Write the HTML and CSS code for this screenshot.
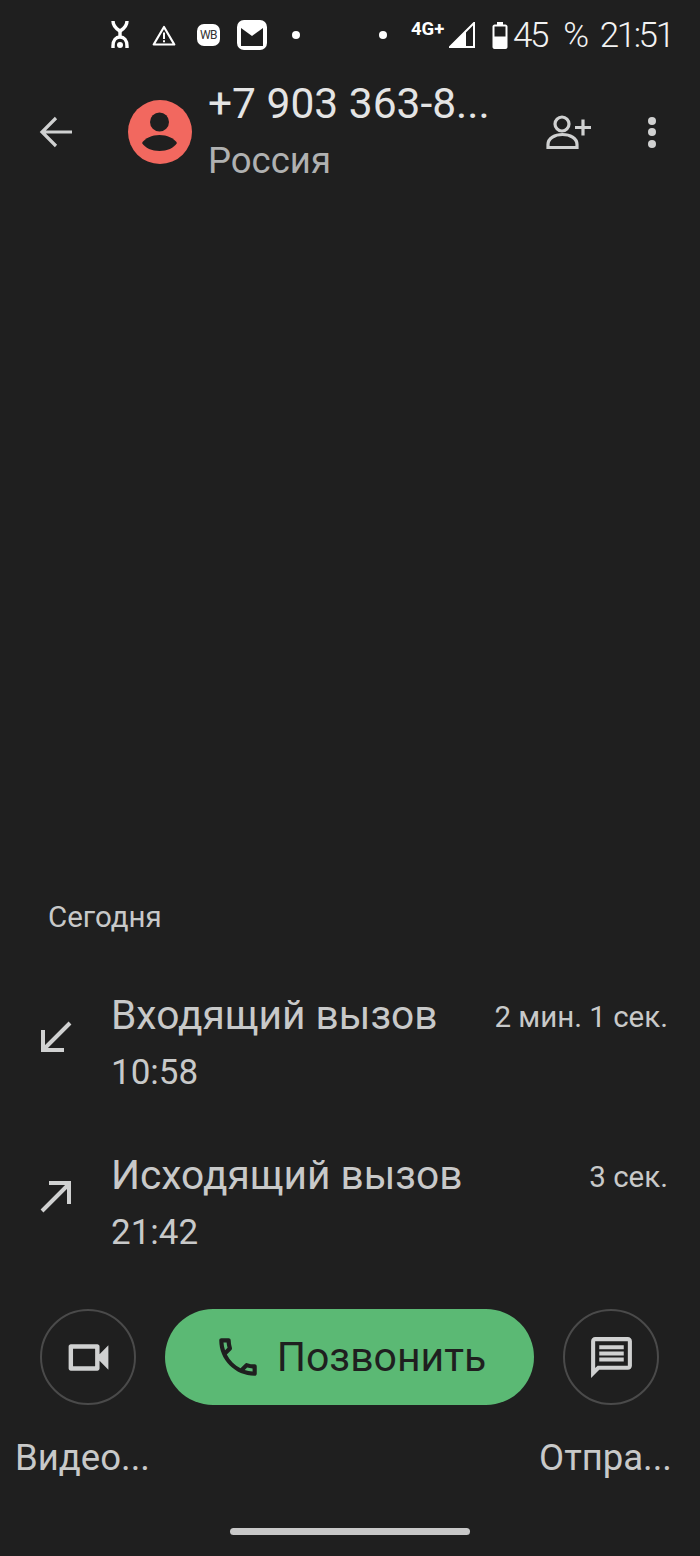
FILE: index.html
```html
<!DOCTYPE html>
<html lang="ru">
<head>
  <meta charset="UTF-8" />
  <meta name="viewport" content="width=device-width, initial-scale=1" />
  <title>Звонок</title>
  <link rel="stylesheet" href="styles.css">
</head>
<body>
  <div class="page">
    <div class="status-bar">
      <svg class="st-yota" width="20" height="30" viewBox="0 0 20 30">
        <path d="M3 1C3 7 7 9 10 11 13 9 17 7 17 1" fill="none" stroke="#fff" stroke-width="3.400"/>
        <path d="M10 9v7" stroke="#fff" stroke-width="3.400"/>
        <path d="M3 28v-2c0-6 3-9 7-9s7 3 7 9v2" fill="none" stroke="#fff" stroke-width="3.400"/>
        <circle cx="10" cy="25" r="3" fill="#fff"/>
      </svg>
      <svg class="st-warn" width="24" height="21" viewBox="0 0 24 21">
        <path d="M12 2 22.300 19.500H1.700z" fill="none" stroke="#fff" stroke-width="2.200" stroke-linejoin="round"/>
        <path d="M12 7.500v6.500M12 15.300v2" stroke="#fff" stroke-width="2"/>
      </svg>
      <span class="st-wb">WB</span>
      <span class="st-mail">
        <svg width="22" height="22" viewBox="0 0 22 22"><path d="M0 0H22V22H0z" fill="#1f1f1f"/><path d="M0 0H22V4L11 12 0 4z" fill="#fff"/></svg>
      </span>
      <span class="st-dot"></span>
      <span class="st-dot st-dot-second"></span>
      <span class="st-net">4G+</span>
      <svg class="st-signal" width="26" height="26" viewBox="0 0 26 26">
        <path d="M25 1V25H1z" fill="none" stroke="#fff" stroke-width="2"/>
        <path d="M17 9V25H1z" fill="#fff"/>
      </svg>
      <svg class="st-battery" width="16" height="27" viewBox="0 0 16 27">
        <path d="M5 0h6v2.500h2.500c1 0 2 1 2 2V25c0 1-1 2-2 2h-11c-1 0-2-1-2-2V4.500c0-1 1-2 2-2H5z" fill="#fff"/>
        <rect x="2.500" y="4.500" width="11" height="10" fill="#1f1f1f"/>
      </svg>
      <span class="st-text st-percent">45 %</span>
      <span class="st-text st-time">21:51</span>
    </div>

    <header class="top-bar">
      <svg class="back-icon" width="34" height="32" viewBox="0 0 34 32">
        <path d="M33 16H4M17 2 3 16l14 14" fill="none" stroke="#d0d1d1" stroke-width="3.200"/>
      </svg>
      <svg class="avatar" width="64" height="64" viewBox="0 0 64 64">
        <circle cx="32" cy="32" r="32" fill="#f2685f"/>
        <circle cx="31.500" cy="22" r="9.500" fill="#1f1f1f"/>
        <path d="M14 43c3-5 10-8 17.500-8s14.500 3 17.500 8c-3 5-10 8-17.500 8S17 48 14 43z" fill="#1f1f1f"/>
      </svg>
      <div class="contact">
        <div class="contact-name">+7 903 363-8...</div>
        <div class="contact-place">Россия</div>
      </div>
      <svg class="add-icon" width="46" height="34" viewBox="0 0 46 34">
        <circle cx="16" cy="9" r="7" fill="none" stroke="#d0d1d1" stroke-width="3.200"/>
        <path d="M2 32.500v-3C2 23 9 19.500 16.500 19.500S31 23 31 29.500v3z" fill="none" stroke="#d0d1d1" stroke-width="3.200"/>
        <path d="M29 12.500h16M37 4.500v16" stroke="#d0d1d1" stroke-width="3.200"/>
      </svg>
      <div class="more-icon"><span></span><span></span><span></span></div>
    </header>

    <main class="history">
      <div class="day-label">Сегодня</div>
      <div class="call-row">
        <svg class="call-arrow" width="34" height="34" viewBox="0 0 34 34">
          <path d="M31 3 5 29M4 10v20h21" fill="none" stroke="#d0d1d1" stroke-width="4"/>
        </svg>
        <div class="call-info">
          <div class="call-type">Входящий вызов</div>
          <div class="call-time">10:58</div>
        </div>
        <div class="call-length">2 мин. 1 сек.</div>
      </div>
      <div class="call-row">
        <svg class="call-arrow" width="34" height="34" viewBox="0 0 34 34">
          <path d="M3 31 29 5M10 3h20v21" fill="none" stroke="#d0d1d1" stroke-width="4"/>
        </svg>
        <div class="call-info">
          <div class="call-type">Исходящий вызов</div>
          <div class="call-time">21:42</div>
        </div>
        <div class="call-length">3 сек.</div>
      </div>
    </main>

    <div class="actions">
      <div class="round-btn">
        <svg width="53" height="53" viewBox="0 0 24 24" fill="#d0d1d1"><path d="M15 8v8H5V8h10m1-2H4c-.55 0-1 .45-1 1v10c0 .55.45 1 1 1h12c.55 0 1-.45 1-1v-3.500l4 4v-11l-4 4V7c0-.55-.45-1-1-1z"/></svg>
      </div>
      <div class="call-btn">
        <svg width="50" height="50" viewBox="0 0 24 24" fill="#1f1f1f"><path d="M6.540 5c.06.89.21 1.760.45 2.590l-1.200 1.200c-.41-1.200-.67-2.470-.76-3.790h1.510m9.860 12.020c.85.24 1.720.39 2.600.45v1.490c-1.320-.09-2.590-.35-3.800-.75l1.200-1.190M7.500 3H4c-.55 0-1 .45-1 1 0 9.390 7.610 17 17 17 .55 0 1-.45 1-1v-3.490c0-.55-.45-1-1-1-1.240 0-2.450-.2-3.570-.57-.1-.04-.21-.05-.31-.05-.26 0-.51.1-.71.29l-2.200 2.200c-2.830-1.450-5.150-3.760-6.590-6.590l2.200-2.200c.28-.28.36-.67.25-1.020C8.700 6.450 8.500 5.250 8.500 4c0-.55-.45-1-1-1z"/></svg>
        <span>Позвонить</span>
      </div>
      <div class="round-btn">
        <svg width="49" height="49" viewBox="0 0 24 24" fill="#d0d1d1"><path d="M20 2H4c-1.100 0-1.990.9-1.990 2L2 22l4-4h14c1.100 0 2-.9 2-2V4c0-1.100-.9-2-2-2zm0 14H5.170L4 17.170V4h16v12zM6 12h12v2H6zm0-3h12v2H6zm0-3h12v2H6z"/></svg>
      </div>
    </div>
    <div class="action-labels">
      <span>Видео...</span>
      <span>Отпра...</span>
    </div>
    <div class="nav-area"><div class="home-bar"></div></div>
  </div>
</body>
</html>
```

FILE: styles.css
```css
html, body {
  margin: 0;
  background-color: #1f1f1f;
}
.page {
  width: 700px;
  height: 1556px;
  display: flex;
  flex-direction: column;
  font-family: Roboto, 'Noto Sans', sans-serif;
  color: #c8c9c9;
  overflow: hidden;
}

/* status bar */
.status-bar {
  height: 70px;
  display: flex;
  align-items: center;
  padding-left: 110px;
  box-sizing: border-box;
  flex: none;
}
.st-yota { margin-right: 22px; }
.st-warn { margin-right: 21px; }
.st-wb {
  width: 23px;
  height: 22px;
  border-radius: 7px;
  background: #fff;
  color: #333;
  font-size: 12px;
  line-height: 22px;
  text-align: center;
  letter-spacing: -0.5px;
  margin-right: 17px;
}
.st-mail {
  width: 30px;
  height: 30px;
  border-radius: 7px;
  background: #fff;
  display: flex;
  align-items: center;
  justify-content: center;
  margin-right: 25px;
}
.st-dot {
  width: 8px;
  height: 8px;
  border-radius: 50%;
  background: #fff;
}
.st-dot-second {
  margin-left: 79px;
  margin-right: 24px;
}
.st-net {
  font-size: 18.500px;
  font-weight: 700;
  color: #fff;
  margin-top: -13px;
  width: 38px;
}
.st-signal { margin-right: 17px; }
.st-battery { margin-right: 5px; }
.st-text {
  font-size: 35px;
  font-weight: 300;
  letter-spacing: -2.400px;
  color: #f2f2f2;
}
.st-percent {
  margin-right: 13px;
  word-spacing: 10px;
}

/* contact header */
.top-bar {
  height: 124px;
  display: flex;
  align-items: center;
  flex: none;
}
.back-icon { margin-left: 39px; }
.avatar { margin-left: 55px; }
.contact {
  margin-left: 16px;
  width: 338px;
}
.contact-name {
  font-size: 42.500px;
  line-height: 58px;
  color: #e4e4e4;
  white-space: nowrap;
}
.contact-place {
  font-size: 36.500px;
  line-height: 56px;
  color: #b0b1b1;
}
.more-icon {
  margin-left: 56px;
  display: flex;
  flex-direction: column;
  gap: 3.500px;
}
.more-icon span {
  width: 8px;
  height: 8px;
  border-radius: 50%;
  background: #d0d1d1;
}

/* call history */
.history {
  flex: 1;
  display: flex;
  flex-direction: column;
  justify-content: flex-end;
  padding-bottom: 25px;
}
.day-label {
  font-size: 29.500px;
  line-height: 32px;
  padding-left: 48px;
  margin-bottom: 31px;
}
.call-row {
  height: 160px;
  display: flex;
  align-items: center;
  padding: 0 32px 0 39px;
  box-sizing: border-box;
}
.call-arrow {
  flex: none;
  margin-bottom: 15px;
}
.call-info {
  margin-left: 38px;
  flex: 1;
}
.call-type {
  font-size: 40.700px;
  line-height: 58px;
  white-space: nowrap;
}
.call-time {
  font-size: 35px;
  line-height: 58px;
}
.call-length {
  font-size: 29.500px;
  align-self: flex-start;
  margin-top: 36px;
}

/* buttons at the bottom */
.actions {
  display: flex;
  align-items: center;
  padding-left: 40px;
  flex: none;
}
.round-btn {
  width: 92px;
  height: 92px;
  border: 2px solid #4a4a4a;
  border-radius: 50%;
  display: flex;
  align-items: center;
  justify-content: center;
  flex: none;
}
.call-btn {
  width: 369px;
  height: 96px;
  margin: 0 29px;
  border-radius: 48px;
  background-color: #5bb974;
  color: #1f1f1f;
  font-size: 41px;
  display: flex;
  align-items: center;
  justify-content: center;
  gap: 14px;
  flex: none;
}
.action-labels {
  display: flex;
  justify-content: space-between;
  padding: 0 28px 0 15px;
  font-size: 36.500px;
  line-height: 50px;
  margin-top: 28px;
  flex: none;
}
.nav-area {
  height: 73px;
  display: flex;
  align-items: center;
  justify-content: center;
  padding-top: 24px;
  box-sizing: border-box;
  flex: none;
}
.home-bar {
  width: 240px;
  height: 7px;
  border-radius: 4px;
  background: #c8c8c8;
}
```
